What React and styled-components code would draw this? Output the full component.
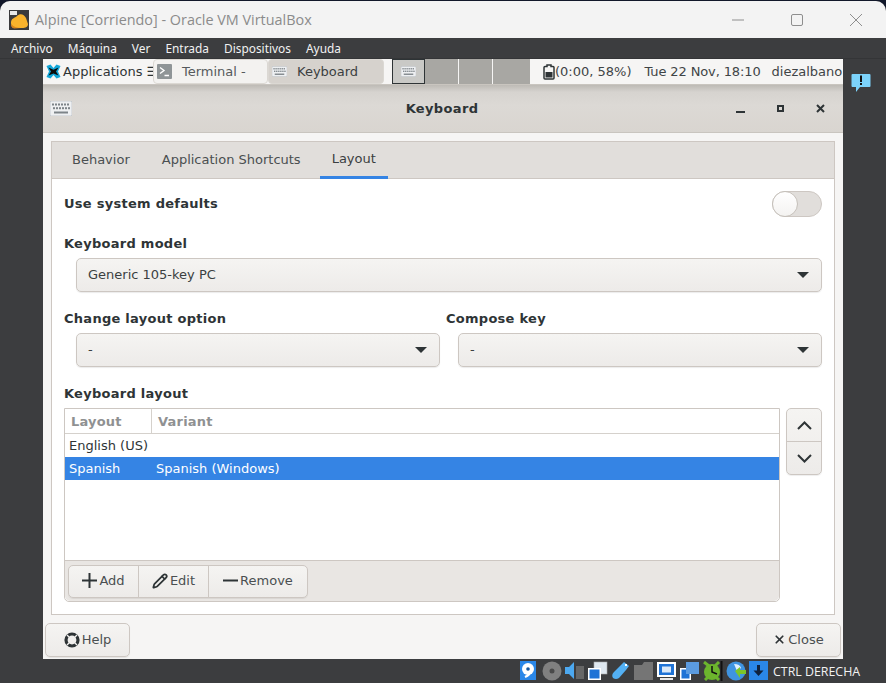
import React from 'react'
import styled, { createGlobalStyle } from 'styled-components'
import { Pencil, X } from 'lucide-react'

const GlobalStyle = createGlobalStyle`
  html, body {
    margin: 0;
    padding: 0;
    background: #12182a;
  }
  * { box-sizing: border-box; }
`

const Window = styled.div`
  width: 886px;
  height: 683px;
  display: flex;
  flex-direction: column;
  overflow: hidden;
  background: #3c3d3f;
  border-radius: 10px 10px 0 0;
  margin-top: 1px;
  font-family: 'DejaVu Sans', sans-serif;
  font-size: 13px;
  color: #2e3436;
`

const TitleBar = styled.div`
  height: 37px;
  background: #f3f3f3;
  display: flex;
  align-items: center;
  padding: 0 1px 0 9px;
  font-family: 'Open Sans', 'Noto Sans', sans-serif;
  font-size: 14.4px;
  color: #8b8b8b;
  flex: none;
`

const TitleText = styled.span`
  margin-left: 6px;
  flex: 1;
  white-space: nowrap;
`

const WinButton = styled.div`
  width: 59px;
  height: 37px;
  display: flex;
  align-items: center;
  justify-content: center;
`

const MenuBar = styled.div`
  height: 21px;
  flex: none;
  display: flex;
  align-items: center;
  padding-left: 11px;
  gap: 15px;
  font-family: 'Noto Sans', sans-serif;
  font-size: 11.9px;
  color: #f2f2f2;
  background: #3c3d3f;
  border-bottom: 1px solid #343537;
`

const VmArea = styled.div`
  height: 600px;
  flex: none;
  display: flex;
`

const Side = styled.div`
  width: 43px;
  position: relative;
  background: #3c3d3f;
`

const Guest = styled.div`
  width: 800px;
  display: flex;
  flex-direction: column;
  background: #f6f5f4;
`

const Panel = styled.div`
  height: 26px;
  flex: none;
  display: flex;
  align-items: stretch;
  background: #f6f5f4;
  border-bottom: 1px solid #c9c5bf;
`

const AppMenu = styled.div`
  width: 110px;
  flex: none;
  display: flex;
  align-items: center;
  padding-left: 3px;
  gap: 2px;
  white-space: nowrap;
  overflow: hidden;
  svg { flex: none; }
`

const TaskButton = styled.div`
  width: ${(p) => p.$width}px;
  flex: none;
  height: 25px;
  display: flex;
  align-items: center;
  gap: 10px;
  padding-left: 3px;
  border: 1px solid #dbd8d3;
  border-radius: 4px;
  color: ${(p) => (p.$active ? '#3b3f41' : '#555a5c')};
  background: ${(p) => (p.$active ? '#d6d2cd' : '#f3f2f0')};
  white-space: nowrap;
`

const Pager = styled.div`
  display: flex;
  flex: none;
  margin-left: 8px;
  background: #a8a7a3;
`

const PagerCell = styled.div`
  width: ${(p) => p.$width}px;
  height: 25px;
  display: flex;
  align-items: center;
  justify-content: center;
  border-right: 1px solid #f6f5f4;
  ${(p) => p.$current && 'background: #c9c9c6; border: 1px solid #2e3436;'}
  ${(p) => p.$last && 'border-right: none;'}
`

const Tray = styled.div`
  flex: 1;
  display: flex;
  align-items: center;
  padding-left: 13px;
  white-space: nowrap;
  overflow: hidden;
  color: #3f4446;
  svg { flex: none; }
`

const Clock = styled.span`
  margin-left: 13px;
  letter-spacing: -0.12px;
`

const UserName = styled.span`
  margin-left: 11px;
`

const DialogHeader = styled.div`
  height: 48px;
  flex: none;
  display: flex;
  align-items: center;
  padding-left: 7px;
  background: linear-gradient(#bdbab5 0, #d6d3cf 7px, #dcd9d5 20px, #d9d5d0 100%);
  border-bottom: 1px solid #c9c5bf;
`

const DialogTitle = styled.div`
  flex: 1;
  text-align: center;
  font-weight: bold;
  letter-spacing: 0.35px;
  padding-left: 72px;
  margin-left: 20px;
`

const HeaderActions = styled.div`
  display: flex;
  align-items: center;
  width: 123px;
`

const HeaderAction = styled.div`
  width: 40px;
  display: flex;
  justify-content: center;
`

const DialogBody = styled.div`
  flex: 1;
  display: flex;
  flex-direction: column;
  padding: 8px 8px 0;
`

const Notebook = styled.div`
  height: 474px;
  flex: none;
  display: flex;
  flex-direction: column;
  border: 1px solid #cdc7c2;
  background: #fff;
`

const TabStrip = styled.div`
  height: 37px;
  flex: none;
  display: flex;
  background: #e1dedb;
  border-bottom: 1px solid #cdc7c2;
  padding-left: 8px;
`

const Tab = styled.div`
  padding: 0 12px 2px;
  margin-right: ${(p) => p.$gap || 0}px;
  display: flex;
  align-items: center;
  color: #4a4f51;
  height: 37px;
  ${(p) => p.$active && 'border-bottom: 3px solid #3584e4; padding-top: 1px; color: #3b3f41;'}
`

const TabContent = styled.div`
  flex: 1;
  padding: 12px;
  display: flex;
  flex-direction: column;
`

const Row = styled.div`
  display: flex;
  align-items: center;
  justify-content: space-between;
  height: 26px;
`

const Label = styled.div`
  font-weight: bold;
  letter-spacing: 0.27px;
  line-height: 16px;
  margin-top: ${(p) => p.$top || 0}px;
  margin-bottom: ${(p) => p.$bottom ?? 6}px;
`

const Switch = styled.div`
  width: 50px;
  height: 26px;
  border-radius: 13px;
  background: #e1dedb;
  border: 1px solid #cdc7c2;
  display: flex;
  align-items: center;
`

const Knob = styled.div`
  width: 26px;
  height: 26px;
  margin-left: -1px;
  border-radius: 50%;
  background: linear-gradient(#fff, #f4f3f1);
  border: 1px solid #c6c1bb;
`

const Combo = styled.div`
  height: 34px;
  margin-left: 12px;
  display: flex;
  align-items: center;
  justify-content: space-between;
  padding: 0 12px 1px 11px;
  border: 1px solid #cdc7c2;
  border-radius: 5px;
  background: linear-gradient(#f5f4f2, #edebe9);
  box-shadow: 0 1px 1px rgba(0, 0, 0, 0.08);
  color: #3b3f41;
`

const Caret = styled.div`
  width: 0;
  height: 0;
  border-left: 6px solid transparent;
  border-right: 6px solid transparent;
  border-top: 6px solid #2e3436;
`

const TwoColumns = styled.div`
  display: grid;
  grid-template-columns: 376px 376px;
  column-gap: 6px;
  margin-top: 19px;
`

const LayoutSection = styled.div`
  display: flex;
  gap: 6px;
  align-items: flex-start;
`

const LayoutBox = styled.div`
  width: 716px;
  height: 194px;
  display: flex;
  flex-direction: column;
  border: 1px solid #cdc7c2;
  border-radius: 0 0 5px 5px;
`

const TreeHeader = styled.div`
  height: 25px;
  flex: none;
  display: flex;
  border-bottom: 1px solid #d5d1cc;
  font-weight: bold;
  color: #8f9192;
`

const HeaderCell = styled.div`
  width: ${(p) => p.$width}px;
  padding-left: 6px;
  display: flex;
  align-items: center;
  letter-spacing: 0.2px;
  ${(p) => p.$sep && 'border-right: 1px solid #d5d1cc;'}
`

const TreeList = styled.div`
  flex: 1;
`

const TreeRow = styled.div`
  height: 23px;
  display: flex;
  align-items: center;
  padding-left: 4px;
  background: ${(p) => (p.$selected ? '#3584e4' : '#fff')};
  color: ${(p) => (p.$selected ? '#fff' : '#2e3436')};
`

const TreeCell = styled.div`
  width: ${(p) => p.$width}px;
  white-space: nowrap;
`

const ListToolbar = styled.div`
  height: 41px;
  flex: none;
  display: flex;
  align-items: center;
  padding-left: 3px;
  background: #e9e6e3;
  border-top: 1px solid #cdc7c2;
  border-radius: 0 0 5px 5px;
`

const ButtonGroup = styled.div`
  display: flex;
  height: 33px;
  border: 1px solid #cdc7c2;
  border-radius: 5px;
  background: linear-gradient(#f5f4f2, #edebe9);
  box-shadow: 0 1px 1px rgba(0, 0, 0, 0.07);
`

const GroupButton = styled.div`
  width: ${(p) => p.$width}px;
  display: flex;
  align-items: center;
  justify-content: center;
  gap: 2px;
  padding-bottom: 1px;
  color: #4a4f51;
  &:not(:last-child) {
    border-right: 1px solid #cdc7c2;
  }
`

const UpDown = styled.div`
  width: 36px;
  height: 67px;
  flex: none;
  display: flex;
  flex-direction: column;
  border: 1px solid #cdc7c2;
  border-radius: 5px;
  background: linear-gradient(#f5f4f2, #edebe9);
  box-shadow: 0 1px 1px rgba(0, 0, 0, 0.07);
`

const UpDownButton = styled.div`
  flex: 1;
  display: flex;
  align-items: center;
  justify-content: center;
  &:first-child {
    border-bottom: 1px solid #cdc7c2;
  }
`

const DialogFooter = styled.div`
  flex: 1;
  display: flex;
  justify-content: space-between;
  align-items: flex-start;
  padding: 8px 2px 0;
  margin: 0 -8px;
`

const FooterButton = styled.div`
  width: 85px;
  height: 34px;
  display: flex;
  align-items: center;
  justify-content: center;
  gap: 2px;
  padding-bottom: 1px;
  border: 1px solid #cdc7c2;
  border-radius: 5px;
  background: linear-gradient(#f5f4f2, #edebe9);
  box-shadow: 0 1px 1px rgba(0, 0, 0, 0.07);
  color: #4a4f51;
`

const Notice = styled.div`
  position: absolute;
  left: 8px;
  top: 14px;
`

const StatusBar = styled.div`
  height: 24px;
  flex: none;
  display: flex;
  align-items: center;
  padding-left: 519px;
  gap: 3px;
  background: #3c3d3f;
`

const StatusText = styled.span`
  margin-left: 1px;
  font-family: 'Open Sans', 'Noto Sans', sans-serif;
  font-size: 12.4px;
  color: #f2f2f2;
  white-space: nowrap;
`

const KeyboardIcon = ({ size = 15, color = '#eef0f2' }) => (
  <svg width={size} height={Math.round(size * 0.7)} viewBox="0 0 22 15">
    <rect width="22" height="15" rx="1.5" fill={color} stroke="#b5bcc4" strokeWidth="0.7" />
    {[2, 5, 8, 11, 14, 17].map((x) => (
      <rect key={x} x={x} y="2.5" width="2" height="2" fill="#7d8489" />
    ))}
    {[3, 6, 9, 12, 15, 18].map((x) => (
      <rect key={x} x={x} y="6.2" width="2" height="2" fill="#7d8489" />
    ))}
    <rect x="4" y="10.5" width="14" height="2" fill="#7d8489" />
  </svg>
)

const VboxLogo = () => (
  <svg width="20" height="20" viewBox="0 0 20 20">
    <rect width="20" height="20" fill="#3a3a3c" />
    <rect x="1" y="1" width="7" height="4" fill="#e8e8e8" />
    <path d="M2 13 C2 8 6 8 8 6 C11 3 15 4 17 8 L19 14 C19 18 15 18 12 18 L5 18 C3 18 2 16 2 13Z" fill="#f9b32c" />
    <path d="M2 14 C5 17 8 18 12 18 L5 18.5 C3 18 2 16 2 14Z" fill="#d9821a" />
  </svg>
)

const XfceIcon = () => (
  <svg width="15" height="15" viewBox="0 0 15 15">
    <path d="M0.5 2 L4.5 0.5 L7.5 4 L10.5 0.5 L14.5 2 L12 7.5 L14.5 13 L10.5 14.5 L7.5 11 L4.5 14.5 L0.5 13 L3 7.5Z" fill="#12a6d8" />
    <path d="M2.5 3.5 L7.5 5.8 L12.5 3.5 L10 7.5 L12.5 11.5 L7.5 9.5 L2.5 11.5 L5 7.5Z" fill="#0b0b0b" />
  </svg>
)

const TerminalIcon = () => (
  <svg width="15" height="15" viewBox="0 0 15 15">
    <rect width="15" height="15" rx="1" fill="#8f9597" />
    <path d="M3 3.5 L7 6.5 L3 9.5" fill="none" stroke="#fff" strokeWidth="1.4" />
    <path d="M7.5 11.5 H12" stroke="#fff" strokeWidth="1.4" />
  </svg>
)

const BatteryIcon = () => (
  <svg width="12" height="16" viewBox="0 0 12 16">
    <path d="M4 1 H8 V2.5 H10 Q11 2.5 11 3.5 V14 Q11 15 10 15 H2 Q1 15 1 14 V3.5 Q1 2.5 2 2.5 H4Z" fill="none" stroke="#2e3436" strokeWidth="1.5" />
    <rect x="2.5" y="8" width="7" height="5.5" fill="#2e3436" />
  </svg>
)

const HelpIcon = () => (
  <svg width="16" height="16" viewBox="0 0 16 16">
    <circle cx="8" cy="8" r="6" fill="none" stroke="#2e3436" strokeWidth="3.2" />
    <path d="M3 3 L6 6 M13 3 L10 6 M3 13 L6 10 M13 13 L10 10" stroke="#f2f1ef" strokeWidth="1.4" />
  </svg>
)

const PlusIcon = () => (
  <svg width="15" height="15" viewBox="0 0 15 15">
    <path d="M7.5 0 V15 M0 7.5 H15" stroke="#2e3436" strokeWidth="2" />
  </svg>
)

const MinusIcon = () => (
  <svg width="15" height="15" viewBox="0 0 15 15">
    <path d="M0 7.5 H15" stroke="#2e3436" strokeWidth="2" />
  </svg>
)

const ChevronIcon = ({ up }) => (
  <svg width="15" height="9" viewBox="0 0 15 9">
    <path d={up ? 'M1 8 L7.5 1.5 L14 8' : 'M1 1 L7.5 7.5 L14 1'} fill="none" stroke="#2e3436" strokeWidth="2" />
  </svg>
)

const NoticeIcon = () => (
  <svg width="20" height="20" viewBox="0 0 20 20">
    <path d="M1.5 1 H18.5 Q19.5 1 19.5 2 V13 Q19.5 14 18.5 14 H9 L5 19 V14 H1.5 Q0.5 14 0.5 13 V2 Q0.5 1 1.5 1Z" fill="#7cd3fb" />
    <rect x="9" y="2.5" width="2" height="6.5" fill="#111" />
    <rect x="9" y="10" width="2" height="2" fill="#111" />
  </svg>
)

const statusIcons = [
  <g key="hd"><rect x="1" y="0" width="16" height="19" fill="#2a87e8" /><circle cx="9" cy="8" r="6" fill="#fff" /><circle cx="9" cy="8" r="1.8" fill="#16569e" /><path d="M11 10 Q11 14 6 16" fill="none" stroke="#fff" strokeWidth="2.4" /></g>,
  <g key="cd"><circle cx="10" cy="10" r="9.5" fill="#808080" /><circle cx="10" cy="10" r="2.5" fill="#4a4a4a" /></g>,
  <g key="audio"><path d="M0 6 H4 L9 1 V18 L4 13 H0Z" fill="#4ca8f0" /><rect x="11" y="5" width="8" height="13" fill="#666" /></g>,
  <g key="net"><rect x="6" y="1" width="13" height="12" fill="#dfe8f0" stroke="#aaa" strokeWidth="0.6" /><rect x="0" y="7" width="13" height="12" fill="#fff" /><rect x="1.5" y="8.5" width="10" height="9" fill="#1f73d6" /></g>,
  <g key="usb"><path d="M13 1 L18 5 L15 9 L8 17 Q5 19 2 17 Q0 14 3 11 Z" fill="#53b0f3" /><rect x="14" y="3" width="2" height="2" fill="#fff" /></g>,
  <g key="folder"><path d="M0 4 H8 L10 1 H19 V19 H0Z" fill="#757575" /></g>,
  <g key="display"><rect x="0" y="1" width="19" height="15" fill="#fff" /><rect x="2" y="3" width="15" height="11" fill="#1f73d6" /><rect x="5" y="5.5" width="9" height="6" fill="#dbe9f8" /><rect x="3" y="17" width="13" height="2" fill="#e8e8e8" /></g>,
  <g key="capture"><rect x="0" y="7" width="11" height="12" fill="#fff" /><rect x="1.5" y="8.5" width="8" height="9" fill="#1f73d6" /><rect x="6" y="1" width="13" height="12" fill="#5b9be0" /></g>,
  <g key="vt"><circle cx="9" cy="11" r="8" fill="#6cb52d" /><path d="M1 1 L6 5 M16 1 L12 5 M2 19 L5 16 M16 19 L13 16" stroke="#6cb52d" strokeWidth="3" /><path d="M9 5 V11 L14 13" fill="none" stroke="#111" strokeWidth="1.5" /><rect x="17.5" y="0" width="2" height="20" fill="#111" /></g>,
  <g key="globe"><circle cx="10" cy="10" r="9.5" fill="#3f94e0" /><path d="M8 3 Q14 3 15 7 L11 10 Z" fill="#dff0ff" /><path d="M9 10 L14 6 V9 H20 V13 H14 V17Z" fill="#7cc52a" /></g>,
  <g key="kbd"><rect x="0" y="0" width="19" height="19" fill="#2a87e8" /><path d="M9.5 15 L4.5 9.5 H8 V4 H11 V9.5 H14.5Z" fill="#10233f" /></g>,
]

const App = () => (
  <Window>
    <GlobalStyle />
    <TitleBar>
      <VboxLogo />
      <TitleText>Alpine [Corriendo] - Oracle VM VirtualBox</TitleText>
      <WinButton>
        <svg width="12" height="2" viewBox="0 0 12 2">
          <path d="M0 1 H12" stroke="#8e8e8e" />
        </svg>
      </WinButton>
      <WinButton>
        <svg width="12" height="12" viewBox="0 0 12 12">
          <rect x="0.5" y="0.5" width="11" height="11" rx="1.5" fill="none" stroke="#8e8e8e" />
        </svg>
      </WinButton>
      <WinButton>
        <svg width="12" height="12" viewBox="0 0 12 12">
          <path d="M0 0 L12 12 M12 0 L0 12" stroke="#8e8e8e" />
        </svg>
      </WinButton>
    </TitleBar>
    <MenuBar>
      <span>Archivo</span>
      <span>Máquina</span>
      <span>Ver</span>
      <span>Entrada</span>
      <span>Dispositivos</span>
      <span>Ayuda</span>
    </MenuBar>
    <VmArea>
      <Side />
      <Guest>
        <Panel>
          <AppMenu>
            <XfceIcon />
            <span>Applications ☰</span>
          </AppMenu>
          <TaskButton $width={115}>
            <TerminalIcon />
            <span>Terminal -</span>
          </TaskButton>
          <TaskButton $width={116} $active>
            <KeyboardIcon />
            <span>Keyboard</span>
          </TaskButton>
          <Pager>
            <PagerCell $width={33} $current>
              <KeyboardIcon />
            </PagerCell>
            <PagerCell $width={34} />
            <PagerCell $width={34} />
            <PagerCell $width={37} $last />
          </Pager>
          <Tray>
            <BatteryIcon />
            <span>(0:00, 58%)</span>
            <Clock>Tue 22 Nov, 18:10</Clock>
            <UserName>diezalbano</UserName>
          </Tray>
        </Panel>
        <DialogHeader>
          <KeyboardIcon size={22} />
          <DialogTitle>Keyboard</DialogTitle>
          <HeaderActions>
            <HeaderAction>
              <svg width="9" height="9" viewBox="0 0 9 9">
                <path d="M0 8 H9" stroke="#2e3436" strokeWidth="2" />
              </svg>
            </HeaderAction>
            <HeaderAction>
              <svg width="7" height="7" viewBox="0 0 7 7">
                <rect x="1" y="1" width="5" height="5" fill="none" stroke="#2e3436" strokeWidth="2" />
              </svg>
            </HeaderAction>
            <HeaderAction>
              <svg width="9" height="9" viewBox="0 0 9 9">
                <path d="M1 1 L8 8 M8 1 L1 8" stroke="#2e3436" strokeWidth="2" />
              </svg>
            </HeaderAction>
          </HeaderActions>
        </DialogHeader>
        <DialogBody>
          <Notebook>
            <TabStrip>
              <Tab $gap={8}>Behavior</Tab>
              <Tab $gap={7}>Application Shortcuts</Tab>
              <Tab $active>Layout</Tab>
            </TabStrip>
            <TabContent>
              <Row>
                <Label $bottom={0}>Use system defaults</Label>
                <Switch>
                  <Knob />
                </Switch>
              </Row>
              <Label $top={19}>Keyboard model</Label>
              <Combo>
                <span>Generic 105-key PC</span>
                <Caret />
              </Combo>
              <TwoColumns>
                <div>
                  <Label>Change layout option</Label>
                  <Combo>
                    <span>-</span>
                    <Caret />
                  </Combo>
                </div>
                <div>
                  <Label>Compose key</Label>
                  <Combo>
                    <span>-</span>
                    <Caret />
                  </Combo>
                </div>
              </TwoColumns>
              <Label $top={19}>Keyboard layout</Label>
              <LayoutSection>
                <LayoutBox>
                  <TreeHeader>
                    <HeaderCell $width={87} $sep>Layout</HeaderCell>
                    <HeaderCell $width={200}>Variant</HeaderCell>
                  </TreeHeader>
                  <TreeList>
                    <TreeRow>
                      <TreeCell $width={87}>English (US)</TreeCell>
                    </TreeRow>
                    <TreeRow $selected>
                      <TreeCell $width={87}>Spanish</TreeCell>
                      <TreeCell $width={200}>Spanish (Windows)</TreeCell>
                    </TreeRow>
                  </TreeList>
                  <ListToolbar>
                    <ButtonGroup>
                      <GroupButton $width={70}>
                        <PlusIcon />
                        Add
                      </GroupButton>
                      <GroupButton $width={70}>
                        <Pencil size={16} strokeWidth={2.6} color="#2e3436" />
                        Edit
                      </GroupButton>
                      <GroupButton $width={98}>
                        <MinusIcon />
                        Remove
                      </GroupButton>
                    </ButtonGroup>
                  </ListToolbar>
                </LayoutBox>
                <UpDown>
                  <UpDownButton>
                    <ChevronIcon up />
                  </UpDownButton>
                  <UpDownButton>
                    <ChevronIcon />
                  </UpDownButton>
                </UpDown>
              </LayoutSection>
            </TabContent>
          </Notebook>
          <DialogFooter>
            <FooterButton>
              <HelpIcon />
              Help
            </FooterButton>
            <FooterButton>
              <X size={13} strokeWidth={3.2} color="#2e3436" />
              Close
            </FooterButton>
          </DialogFooter>
        </DialogBody>
      </Guest>
      <Side>
        <Notice>
          <NoticeIcon />
        </Notice>
      </Side>
    </VmArea>
    <StatusBar>
      {statusIcons.map((icon, i) => (
        <svg key={i} width="20" height="20" viewBox="0 0 20 20">
          {icon}
        </svg>
      ))}
      <StatusText>CTRL DERECHA</StatusText>
    </StatusBar>
  </Window>
)

export default App
